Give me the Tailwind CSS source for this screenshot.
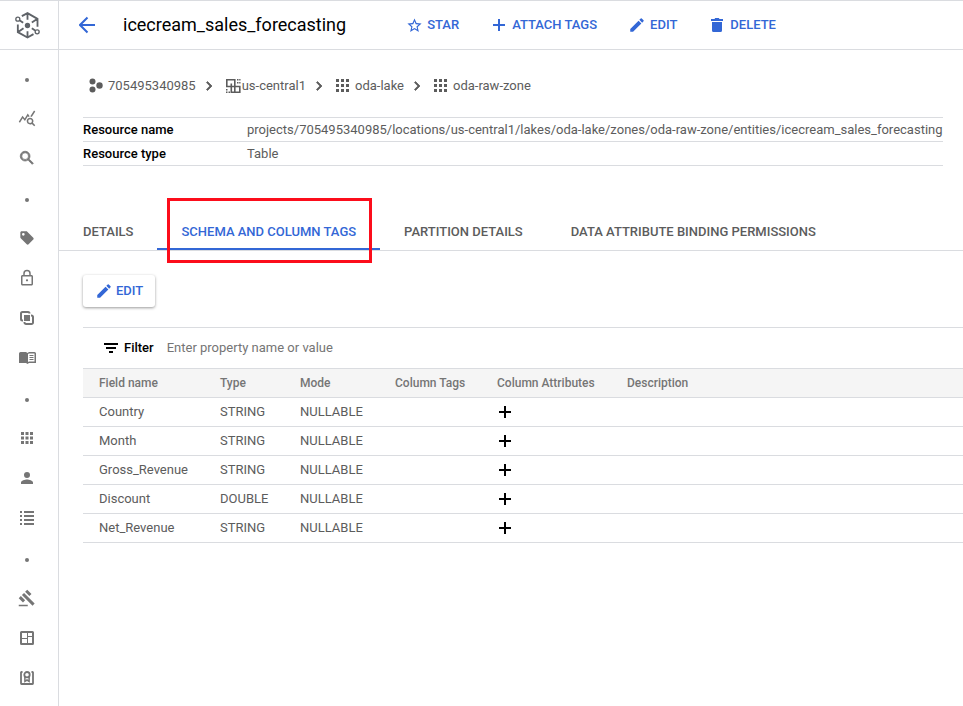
<!DOCTYPE html>
<html lang="en">
<head>
<meta charset="utf-8">
<meta name="viewport" content="width=device-width, initial-scale=1">
<title>icecream_sales_forecasting</title>
<script src="https://cdn.jsdelivr.net/npm/@tailwindcss/browser@4"></script>
</head>
<body class="bg-white font-[Roboto,Arial,sans-serif] text-[13px] leading-5 text-[#5c5c5c]">
<svg class="hidden" aria-hidden="true">
  <symbol id="pencil" viewBox="0 0 24 24"><path d="M3 17.25V21h3.75L17.81 9.94l-3.75-3.75L3 17.25zM20.71 7.04a1 1 0 0 0 0-1.41l-2.34-2.34a1 1 0 0 0-1.41 0l-1.83 1.83 3.75 3.75 1.83-1.83z"/></symbol>
  <symbol id="plus" viewBox="0 0 18 18"><path d="M8 3h2v5h5v2h-5v5H8v-5H3V8h5z"/></symbol>
  <symbol id="chevron" viewBox="0 0 24 24"><path d="M8.6 16.6 13.2 12 8.6 7.4 10 6l6 6-6 6z" stroke="currentColor"/></symbol>
  <symbol id="grid" viewBox="0 0 14 14"><path d="M0 0h3v3H0zM5 0h3v3H5zM10 0h3v3h-3zM0 5h3v3H0zM5 5h3v3H5zM10 5h3v3h-3zM0 10h3v3H0zM5 10h3v3H5zM10 10h3v3h-3z"/></symbol>
  <symbol id="dot" viewBox="0 0 4 4"><circle cx="2" cy="2" r="2"/></symbol>
</svg>
<div class="flex min-h-screen">
  <aside class="w-[59px] shrink-0 border-t border-r border-[#dadce0] fill-[#757575] text-[#757575]">
    <div class="flex h-[49px] items-center justify-center border-b border-[#dadce0] pr-1">
      <svg class="size-[27px]" viewBox="40.5 34.5 81 81" fill="none" stroke="#5f6368" stroke-width="5.500">
        <path d="M64 47 81 38l30 17v24M52 72v23l29 16 18-10M81 38v20M81 92v19M111 55 94 66M52 95l17-12M58 60l10 7M94 83l10 7"/>
        <circle cx="81" cy="75" r="8" fill="#5f6368" stroke="none"/>
        <circle cx="52" cy="56" r="6" stroke-width="4"/><circle cx="110" cy="94" r="6" stroke-width="4"/>
      </svg>
    </div>
    <nav class="pt-2 pr-1">
      <ul>
        <li class="flex h-10 items-center justify-center pt-1"><svg class="size-1"><use href="#dot"/></svg></li>
        <li><a href="#" aria-label="Explore" class="flex h-10 items-center justify-center"><svg class="size-[18px]" viewBox="0 0 24 24"><path d="M19.88 18.47c.44-.7.7-1.510.7-2.390 0-2.490-2.010-4.500-4.500-4.500s-4.500 2.010-4.500 4.500 2.010 4.500 4.490 4.500c.88 0 1.700-.26 2.390-.7L21.580 23 23 21.580l-3.120-3.110zm-3.800.110a2.500 2.500 0 1 1 0-5 2.500 2.500 0 0 1 0 5zM15.720 10.080c-.74.020-1.450.18-2.100.45l-.55-.83-3.800 6.180-3.010-3.520-3.630 5.810L1 17l5-8 3 3.500L13 6l2.720 4.080zm2.590.5c-.64-.28-1.330-.45-2.050-.49L21.380 2 23 3.180l-4.690 7.400z"/></svg></a></li>
        <li><a href="#" aria-label="Search" class="flex h-10 items-center justify-center"><svg class="size-[18px]" viewBox="0 0 24 24"><path stroke="#757575" stroke-width="1" d="M15.500 14h-.79l-.28-.27A6.470 6.470 0 0 0 16 9.500 6.500 6.500 0 1 0 9.500 16c1.610 0 3.090-.59 4.230-1.570l.27.28v.79l5 4.990L20.490 19l-4.990-5zm-6 0a4.500 4.500 0 1 1 0-9 4.500 4.500 0 0 1 0 9z"/></svg></a></li>
        <li class="flex h-10 items-center justify-center pt-1"><svg class="size-1"><use href="#dot"/></svg></li>
        <li><a href="#" aria-label="Tag templates" class="flex h-10 items-center justify-center"><svg class="size-4" viewBox="0 0 24 24"><path d="m21.410 11.580-9-9C12.050 2.220 11.550 2 11 2H4c-1.100 0-2 .9-2 2v7c0 .55.220 1.050.59 1.420l9 9c.36.36.86.58 1.410.58s1.050-.22 1.410-.59l7-7c.37-.36.59-.86.59-1.410s-.23-1.060-.59-1.420zM6.500 8.500a2 2 0 1 1 0-4 2 2 0 0 1 0 4z"/></svg></a></li>
        <li><a href="#" aria-label="Policy tags" class="flex h-10 items-center justify-center"><svg class="size-[18px]" viewBox="0 0 24 24"><path d="M18 8h-1V6A5 5 0 0 0 7 6v2H6c-1.100 0-2 .9-2 2v10c0 1.100.9 2 2 2h12c1.100 0 2-.9 2-2V10c0-1.100-.9-2-2-2zM9 6a3 3 0 0 1 6 0v2H9V6zm9 14H6V10h12v10zm-6-3.500a1.500 1.500 0 1 0 0-3 1.500 1.500 0 0 0 0 3z"/></svg></a></li>
        <li><a href="#" aria-label="Entries" class="flex h-10 items-center justify-center"><svg class="size-4" viewBox="0 0 16 16"><path fill="none" stroke="#757575" stroke-width="2" d="M4 10.500H3.500A1.500 1.500 0 0 1 2 9V3.500A1.500 1.500 0 0 1 3.500 2H9a1.500 1.500 0 0 1 1.500 1.500M12 5.500h.5A1.500 1.500 0 0 1 14 7v5.500a1.500 1.500 0 0 1-1.500 1.500H7a1.500 1.500 0 0 1-1.500-1.500V12"/><path d="M5 5h6v6H5z"/></svg></a></li>
        <li><a href="#" aria-label="Glossaries" class="flex h-10 items-center justify-center"><svg class="h-4 w-[17px]" viewBox="0 0 17 16"><path fill-rule="evenodd" d="M1.500 2H7l1.500 1L10 2h5.500A1.500 1.500 0 0 1 17 3.500V13h-7l-1.500 1L7 13H0V3.500A1.500 1.500 0 0 1 1.500 2zM9 4v8l1-.5h5.500v-8H10z"/><path d="M10.500 5h4v1h-4zM10.500 7h4v1h-4zM10.500 9h4v1h-4z"/></svg></a></li>
        <li class="flex h-10 items-center justify-center pt-1"><svg class="size-1"><use href="#dot"/></svg></li>
        <li><a href="#" aria-label="Manage" class="flex h-10 items-center justify-center"><svg class="size-3" viewBox="0 0 12 12"><path d="M0 0h3v3H0zM4.500 0h3v3h-3zM9 0h3v3H9zM0 4.500h3v3H0zM4.500 4.500h3v3h-3zM9 4.500h3v3H9zM0 9h3v3H0zM4.500 9h3v3h-3zM9 9h3v3H9z"/></svg></a></li>
        <li><a href="#" aria-label="Secure" class="flex h-10 items-center justify-center"><svg class="size-[18px]" viewBox="0 0 24 24"><path d="M12 12a4 4 0 1 0 0-8 4 4 0 0 0 0 8zm0 2c-2.670 0-8 1.340-8 4v2h16v-2c0-2.660-5.330-4-8-4z"/></svg></a></li>
        <li><a href="#" aria-label="Process" class="flex h-10 items-center justify-center"><svg class="size-[14px]" viewBox="0 0 14 14"><path d="M0 0h2v2H0zM4 0h10v2H4zM0 4h2v2H0zM4 4h10v2H4zM0 8h2v2H0zM4 8h10v2H4zM0 12h2v2H0zM4 12h10v2H4z"/></svg></a></li>
        <li class="flex h-10 items-center justify-center pt-1"><svg class="size-1"><use href="#dot"/></svg></li>
        <li><a href="#" aria-label="Govern" class="flex h-10 items-center justify-center"><svg class="size-[18px]" viewBox="0 0 24 24"><path d="M1 21h12v2H1zM5.240 8.070l2.830-2.830 14.140 14.140-2.830 2.830zM12.320 1l5.660 5.660-2.830 2.830-5.660-5.660zM3.830 9.480l5.660 5.660-2.830 2.830L1 12.310z"/></svg></a></li>
        <li><a href="#" aria-label="Data profile" class="flex h-10 items-center justify-center"><svg class="size-[14px]" viewBox="0 0 14 14"><path fill-rule="evenodd" d="M1.500 0h11A1.500 1.500 0 0 1 14 1.500v11a1.500 1.500 0 0 1-1.500 1.500h-11A1.500 1.500 0 0 1 0 12.500v-11A1.500 1.500 0 0 1 1.500 0zM2 2v5h5V2zM2 8v4h5V8zM8 2v3h4V2zM8 6v6h4V6z"/></svg></a></li>
        <li><a href="#" aria-label="Data quality" class="flex h-10 items-center justify-center"><svg class="size-[14px]" viewBox="0 0 14 14" fill="none" stroke="#757575" stroke-width="2"><path d="M2.500 1h-1a.5.500 0 0 0-.5.500v11a.5.500 0 0 0 .5.500h11a.5.500 0 0 0 .5-.5v-11a.5.500 0 0 0-.5-.5h-1" stroke-width="1.800"/><circle cx="7" cy="3.700" r="2.700" stroke-width="1.800"/><path stroke-width="1.500" d="M4.900 5.500v4.800L7 9l2.100 1.300V5.500"/></svg></a></li>
      </ul>
    </nav>
  </aside>
  <div class="min-w-0 grow border-t border-[#dadce0]">
    <header class="flex h-[49px] items-center border-b border-[#dadce0] pl-5 text-[#3367d6]">
      <a href="#" aria-label="Back" class="flex w-11 shrink-0"><svg class="size-[18px]" viewBox="1 0 18 18" fill="none" stroke="currentColor" stroke-width="2"><path d="M17 9H3M9.500 1.500 2 9l7.500 7.500"/></svg></a>
      <h1 class="text-lg text-black">icecream_sales_forecasting</h1>
      <div class="ml-[60px] flex items-center gap-[31px] whitespace-nowrap">
        <button class="flex items-center gap-1 font-medium"><svg class="size-[17px]" viewBox="0 0 24 24" fill="currentColor"><path d="m22 9.240-7.190-.62L12 2 9.190 8.630 2 9.240l5.460 4.730L5.820 21 12 17.270 18.180 21l-1.630-7.030L22 9.240zM12 15.400l-3.760 2.270 1-4.280-3.320-2.880 4.380-.38L12 6.100l1.710 4.040 4.380.38-3.320 2.880 1 4.280L12 15.400z"/></svg>STAR</button>
        <button class="flex items-center gap-1 font-medium"><svg class="size-[18px]" fill="currentColor"><use href="#plus"/></svg>ATTACH TAGS</button>
        <button class="flex items-center gap-1 font-medium"><svg class="size-[18px]" fill="currentColor"><use href="#pencil"/></svg>EDIT</button>
        <button class="flex items-center gap-1 font-medium"><svg class="size-[18px]" viewBox="0 0 18 18" fill="currentColor"><path d="M3 3h3.500l.7-1h3.600l.7 1H15v2H3zM4 6h10v8.500a1.500 1.500 0 0 1-1.500 1.500h-7A1.500 1.500 0 0 1 4 14.500z"/></svg>DELETE</button>
      </div>
    </header>
    <main>
      <nav aria-label="Breadcrumb" class="mt-[26px] px-6">
        <ol class="flex items-center whitespace-nowrap fill-current">
          <li><a href="#" class="flex items-center gap-1"><svg class="ml-[5px] h-4 w-4" viewBox="0 0 16 16"><circle cx="4.500" cy="3.500" r="3"/><circle cx="4.500" cy="11.500" r="3"/><circle cx="11.500" cy="7.500" r="3.200"/></svg>705495340985</a></li>
          <li class="w-[30px] pl-1"><svg class="size-[18px]"><use href="#chevron"/></svg></li>
          <li><a href="#" class="flex items-center gap-px"><svg class="size-[15px]" viewBox="0 0 15 15"><path fill="none" stroke="currentColor" stroke-width="1.600" d="M.8 8.300V.8h8v13M0 7.500h13.800v5.700H5.300V4.500"/><path d="M11 0h1.500v1.500H11zM13.200 0h1.300v1.500h-1.300zM11 3h1.500v1.500H11zM13.200 3h1.300v1.500h-1.300zM0 10h1.500v1.500H0zM0 12.500h1.500V14H0zM2.500 12.500H4V14H2.500z"/></svg>us-central1</a></li>
          <li class="w-[30px] pl-1"><svg class="size-[18px]"><use href="#chevron"/></svg></li>
          <li><a href="#" class="flex items-center gap-[5px]"><svg class="size-[14px]"><use href="#grid"/></svg>oda-lake</a></li>
          <li class="w-[30px] pl-1"><svg class="size-[18px]"><use href="#chevron"/></svg></li>
          <li><a href="#" class="flex items-center gap-[5px]"><svg class="size-[14px]"><use href="#grid"/></svg>oda-raw-zone</a></li>
        </ol>
      </nav>
      <div class="pt-[21px] pl-6">
        <table class="border-collapse text-left">
          <tr class="h-6 border-y border-[#dadce0]"><th scope="row" class="w-[164px] p-0 font-medium text-black">Resource name</th><td class="p-0">projects/705495340985/locations/us-central1/lakes/oda-lake/zones/oda-raw-zone/entities/icecream_sales_forecasting</td></tr>
          <tr class="h-6 border-b border-[#dadce0]"><th scope="row" class="p-0 font-medium text-black">Resource type</th><td class="p-0">Table</td></tr>
        </table>
      </div>
      <div role="tablist" class="mt-[47px] flex h-[38px] border-b border-[#dadce0] whitespace-nowrap">
        <button role="tab" class="px-6 font-medium">DETAILS</button>
        <button role="tab" aria-selected="true" class="relative border-b-2 border-[#3367d6] px-6 pt-[2px] font-medium text-[#3367d6]">SCHEMA AND COLUMN TAGS<span class="absolute -top-[15px] right-2 -bottom-[15px] left-[10px] border-3 border-[#fc0d1b]"></span></button>
        <button role="tab" class="px-6 font-medium">PARTITION DETAILS</button>
        <button role="tab" class="px-6 font-medium">DATA ATTRIBUTE BINDING PERMISSIONS</button>
      </div>
      <section class="pt-6 pl-6">
        <button class="flex h-8 items-center gap-[3px] rounded-[3px] px-3 font-medium text-[#3367d6] shadow-[0_1px_3px_rgba(0,0,0,0.4)]"><svg class="size-[18px]" fill="currentColor"><use href="#pencil"/></svg>EDIT</button>
        <div class="mt-5 flex h-[41px] items-center border-t border-[#dadce0] pl-[21px]">
          <svg class="size-[14px]" viewBox="0 0 14 14" fill="#000"><path d="M0 2h14v2H0zM2 6h10v2H2zM5 10h4v2H5z"/></svg>
          <label for="filter" class="ml-[6px] font-medium text-black">Filter</label>
          <input id="filter" type="text" placeholder="Enter property name or value" class="ml-[13px] grow outline-none placeholder:text-[#757575]">
        </div>
        <table class="w-full table-fixed border-collapse text-left">
          <thead>
            <tr class="h-[29px] border-y border-[#dadce0] bg-[#f5f5f5] text-xs text-[#757575]">
              <th class="w-[121px] py-0 pl-4 font-medium">Field name</th><th class="w-20 py-0 pl-4 font-medium">Type</th><th class="w-[95px] py-0 pl-4 font-medium">Mode</th><th class="w-[102px] py-0 pl-4 font-medium">Column Tags</th><th class="w-[130px] py-0 pl-4 font-medium">Column Attributes</th><th class="py-0 pl-4 font-medium">Description</th>
            </tr>
          </thead>
          <tbody>
            <tr class="h-[29px] border-b border-[#dadce0]"><td class="pl-4">Country</td><td class="pl-4">STRING</td><td class="pl-4">NULLABLE</td><td></td><td class="pl-[15px]"><button aria-label="Add attribute to Country" class="block"><svg class="size-[18px]"><use href="#plus"/></svg></button></td><td></td></tr>
            <tr class="h-[29px] border-b border-[#dadce0]"><td class="pl-4">Month</td><td class="pl-4">STRING</td><td class="pl-4">NULLABLE</td><td></td><td class="pl-[15px]"><button aria-label="Add attribute to Month" class="block"><svg class="size-[18px]"><use href="#plus"/></svg></button></td><td></td></tr>
            <tr class="h-[29px] border-b border-[#dadce0]"><td class="pl-4">Gross_Revenue</td><td class="pl-4">STRING</td><td class="pl-4">NULLABLE</td><td></td><td class="pl-[15px]"><button aria-label="Add attribute to Gross_Revenue" class="block"><svg class="size-[18px]"><use href="#plus"/></svg></button></td><td></td></tr>
            <tr class="h-[29px] border-b border-[#dadce0]"><td class="pl-4">Discount</td><td class="pl-4">DOUBLE</td><td class="pl-4">NULLABLE</td><td></td><td class="pl-[15px]"><button aria-label="Add attribute to Discount" class="block"><svg class="size-[18px]"><use href="#plus"/></svg></button></td><td></td></tr>
            <tr class="h-[29px] border-b border-[#dadce0]"><td class="pl-4">Net_Revenue</td><td class="pl-4">STRING</td><td class="pl-4">NULLABLE</td><td></td><td class="pl-[15px]"><button aria-label="Add attribute to Net_Revenue" class="block"><svg class="size-[18px]"><use href="#plus"/></svg></button></td><td></td></tr>
          </tbody>
        </table>
      </section>
    </main>
  </div>
</div>
</body>
</html>
